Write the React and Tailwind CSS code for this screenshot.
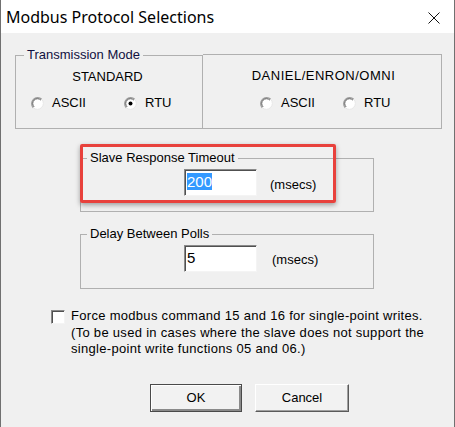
import React from "react";

function Radio({ checked }) {
  return (
    <svg width="13" height="13" viewBox="0 0 13 13" className="shrink-0">
      <circle cx="6.5" cy="6.5" r="6" fill="#ffffff" />
      <path d="M 2.26 10.74 A 6 6 0 0 1 10.74 2.26" stroke="#9a9a9a" strokeWidth="1.2" fill="none" />
      <path d="M 3.1 9.9 A 4.8 4.8 0 0 1 9.9 3.1" stroke="#5a5a5a" strokeWidth="1" fill="none" />
      <path d="M 10.74 2.26 A 6 6 0 0 1 2.26 10.74" stroke="#e6e6e6" strokeWidth="1" fill="none" />
      {checked && <circle cx="6.5" cy="6.5" r="2" fill="#000000" />}
    </svg>
  );
}

function RadioOption({ label, checked, width }) {
  return (
    <div className={`flex items-center gap-[8px] ${width}`}>
      <Radio checked={checked} />
      <span className="leading-[16px]">{label}</span>
    </div>
  );
}

function Sunken({ children }) {
  return (
    <div className="w-[73px] h-[27px] bg-white border-t border-l border-[#8a8a8a] border-r border-b border-r-[#f4f4f4] border-b-[#f4f4f4] shadow-[inset_1px_1px_0_#505050] pl-[2px] pt-[3px] text-[15px] leading-[17px] font-['Liberation_Sans',sans-serif]">
      {children}
    </div>
  );
}

export default function App() {
  return (
    <div className="w-[455px] h-[427px] bg-[#f0f0f0] border-x border-[#707070] flex flex-col text-[13px] text-black font-['Liberation_Sans',Arial,sans-serif] overflow-hidden">
      {/* Title bar */}
      <div className="h-[33px] shrink-0 bg-white flex items-center justify-between pl-[5px] pr-[14px]">
        <span className="text-[16px] leading-[20px] font-['Noto_Sans',sans-serif] text-black">
          Modbus Protocol Selections
        </span>
        <svg width="12" height="12" viewBox="0 0 12 12" className="mt-[2px]">
          <path d="M0.5 0.5 L11.5 11.5 M11.5 0.5 L0.5 11.5" stroke="#111" strokeWidth="1" />
        </svg>
      </div>

      {/* Body */}
      <div className="relative flex flex-col pl-[14px]">
        {/* Transmission mode */}
        <div className="mt-[14px] flex items-end">
          <fieldset className="w-[188px] h-[82px] border border-[#b0b0b0] flex flex-col">
            <legend className="ml-[8px] px-[3px] leading-[16px] text-[#101040]">Transmission Mode</legend>
            <div className="mt-[6px] text-center leading-[16px] pr-[3px]">STANDARD</div>
            <div className="mt-[10px] pl-[15px] flex">
              <RadioOption label="ASCII" width="w-[93px]" />
              <RadioOption label="RTU" checked width="w-[60px]" />
            </div>
          </fieldset>
          <div className="w-[239px] h-[75px] border border-l-0 border-[#b0b0b0] flex flex-col">
            <div className="mt-[13px] text-center leading-[16px] tracking-[0.5px] pl-[3px]">DANIEL/ENRON/OMNI</div>
            <div className="mt-[11px] pl-[57px] flex">
              <RadioOption label="ASCII" width="w-[83px]" />
              <RadioOption label="RTU" width="w-[60px]" />
            </div>
          </div>
        </div>

        {/* Slave response timeout */}
        <fieldset className="mt-[21px] ml-[65px] w-[294px] h-[62px] border border-[#b0b0b0]">
          <legend className="ml-[6px] px-[3px] leading-[16px]">Slave Response Timeout</legend>
          <div className="mt-[3px] ml-[103px] flex items-center">
            <Sunken>
              <span className="bg-[#3399ff] text-white">200</span>
            </Sunken>
            <span className="ml-[13px] mt-[4px] leading-[16px]">(msecs)</span>
          </div>
        </fieldset>

        {/* Delay between polls */}
        <fieldset className="mt-[14px] ml-[65px] w-[294px] h-[63px] border border-[#b0b0b0]">
          <legend className="ml-[6px] px-[3px] leading-[16px]">Delay Between Polls</legend>
          <div className="mt-[3px] ml-[103px] flex items-center">
            <Sunken>5</Sunken>
            <span className="ml-[15px] mt-[3px] leading-[16px]">(msecs)</span>
          </div>
        </fieldset>

        {/* Checkbox */}
        <div className="mt-[19px] ml-[36px] flex items-start">
          <div className="mt-[2px] w-[14px] h-[14px] shrink-0 bg-white border border-t-[#8a8a8a] border-l-[#8a8a8a] border-r-[#f4f4f4] border-b-[#f4f4f4] shadow-[inset_1px_1px_0_#505050]" />
          <div className="ml-[6px] leading-[16.5px] tracking-[0.3px] whitespace-nowrap">
            Force modbus command 15 and 16 for single-point writes.
            <br />
            (To be used in cases where the slave does not support the
            <br />
            single-point write functions 05 and 06.)
          </div>
        </div>

        {/* Buttons */}
        <div className="mt-[26px] ml-[135px] flex gap-[13px]">
          <button className="w-[92px] h-[28px] bg-[#f2f2f2] border border-[#4a4a4a] shadow-[inset_1px_1px_0_#ffffff,inset_-2px_-2px_0_#8a8a8a] leading-[16px]">
            OK
          </button>
          <button className="w-[94px] h-[28px] bg-[#f2f2f2] border border-t-white border-l-white border-r-[#5a5a5a] border-b-[#5a5a5a] shadow-[inset_-1px_-1px_0_#a0a0a0] leading-[16px]">
            Cancel
          </button>
        </div>

        {/* Highlight annotation */}
        <div className="absolute left-[79px] top-[111px] w-[256px] h-[59px] border-[3px] border-[#e8413c] rounded-[2px] shadow-[0_2px_5px_rgba(0,0,0,0.35)] pointer-events-none" />
      </div>
    </div>
  );
}
